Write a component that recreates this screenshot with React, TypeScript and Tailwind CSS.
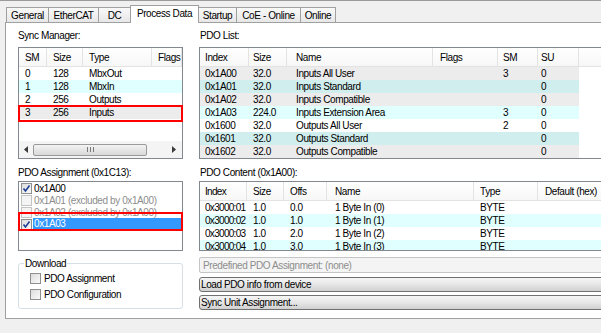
import React from 'react';

const FONT = "font-['Liberation_Sans',Arial,sans-serif]";

const tabs = [
  { label: 'General', w: 'w-[43px]' },
  { label: 'EtherCAT', w: 'w-[51px]' },
  { label: 'DC', w: 'w-[33px]' },
  { label: 'Process Data', w: 'w-[69px]', active: true },
  { label: 'Startup', w: 'w-[39px]' },
  { label: 'CoE - Online', w: 'w-[65px]' },
  { label: 'Online', w: 'w-[36px]' },
];

const smCols = [
  { label: 'SM', w: 'w-[28px]', pl: 'pl-[6px]' },
  { label: 'Size', w: 'w-[36px]', pl: 'pl-[6px]' },
  { label: 'Type', w: 'w-[69px]', pl: 'pl-[6px]' },
  { label: 'Flags', w: 'w-[30px]', pl: 'pl-[6px]' },
];

const smRows = [
  { cells: ['0', '128', 'MbxOut'], bg: 'bg-white' },
  { cells: ['1', '128', 'MbxIn'], bg: 'bg-[#e0ffff]' },
  { cells: ['2', '256', 'Outputs'], bg: 'bg-white' },
  { cells: ['3', '256', 'Inputs'], bg: 'bg-[#ececec]' },
];

const listCols = [
  { label: 'Index', w: 'w-[49px]', pl: 'pl-[5px]' },
  { label: 'Size', w: 'w-[38px]', pl: 'pl-[4px]' },
  { label: 'Name', w: 'w-[146px]', pl: 'pl-[9px]' },
  { label: 'Flags', w: 'w-[65px]', pl: 'pl-[7px]' },
  { label: 'SM', w: 'w-[40px]', pl: 'pl-[5px]' },
  { label: 'SU', w: 'w-[41px]', pl: 'pl-[3px]' },
];

const listRows = [
  { cells: ['0x1A00', '32.0', 'Inputs All User', '', '3', '0'], bg: 'bg-[#ececec]' },
  { cells: ['0x1A01', '32.0', 'Inputs Standard', '', '', '0'], bg: 'bg-[#d0eeee]' },
  { cells: ['0x1A02', '32.0', 'Inputs Compatible', '', '', '0'], bg: 'bg-[#ececec]' },
  { cells: ['0x1A03', '224.0', 'Inputs Extension Area', '', '3', '0'], bg: 'bg-[#e0ffff]' },
  { cells: ['0x1600', '32.0', 'Outputs All User', '', '2', '0'], bg: 'bg-white' },
  { cells: ['0x1601', '32.0', 'Outputs Standard', '', '', '0'], bg: 'bg-[#d0eeee]' },
  { cells: ['0x1602', '32.0', 'Outputs Compatible', '', '', '0'], bg: 'bg-[#ececec]' },
];

const contentCols = [
  { label: 'Index', w: 'w-[47px]', pl: 'pl-[5px] tracking-[-0.7px]' },
  { label: 'Size', w: 'w-[37px]', pl: 'pl-[6px]' },
  { label: 'Offs', w: 'w-[43px]', pl: 'pl-[6px]' },
  { label: 'Name', w: 'w-[147px]', pl: 'pl-[8px]' },
  { label: 'Type', w: 'w-[64px]', pl: 'pl-[6px]' },
  { label: 'Default (hex)', w: 'w-[70px]', pl: 'pl-[7px]' },
];

const contentRows = [
  { cells: ['0x3000:01', '1.0', '0.0', '1 Byte In (0)', 'BYTE', ''], bg: 'bg-white' },
  { cells: ['0x3000:02', '1.0', '1.0', '1 Byte In (1)', 'BYTE', ''], bg: 'bg-[#e0ffff]' },
  { cells: ['0x3000:03', '1.0', '2.0', '1 Byte In (2)', 'BYTE', ''], bg: 'bg-white' },
  { cells: ['0x3000:04', '1.0', '3.0', '1 Byte In (3)', 'BYTE', ''], bg: 'bg-[#e0ffff]' },
];

type Col = { label: string; w: string; pl: string };

const Header = ({ cols }: { cols: Col[] }) => (
  <div className="flex h-[19px] shrink-0 border-b border-[#e3e3e3] bg-linear-to-b from-white to-[#f7f7f7]">
    {cols.map((c) => (
      <div
        key={c.label}
        className={`${c.w} ${c.pl} shrink-0 overflow-hidden whitespace-nowrap border-r border-[#e3e3e3] flex items-center`}
      >
        {c.label}
      </div>
    ))}
    <div className="flex-1" />
  </div>
);

const Row = ({ cols, cells, bg, full }: { cols: Col[]; cells: string[]; bg: string; full?: boolean }) => (
  <div className={`flex h-[13px] shrink-0 ${full ? `${bg} w-full` : ''}`}>
    <div className={`flex ${full ? '' : bg}`}>
      {cols.map((c, i) => (
        <div key={c.label} className={`${c.w} ${c.pl} shrink-0 overflow-hidden whitespace-nowrap leading-[13px]`}>
          {cells[i] ?? ''}
        </div>
      ))}
    </div>
  </div>
);

const CheckBox = ({ checked, disabled }: { checked?: boolean; disabled?: boolean }) => (
  <div
    className={`relative w-[11px] h-[11px] shrink-0 border ${
      disabled ? 'border-[#c4c4c4] bg-[#f4f4f4]' : 'border-[#8e8f8f] bg-linear-to-br from-[#dcdcdc] to-[#fafafa]'
    }`}
  >
    {checked && (
      <svg className="absolute left-0 top-0" width="9" height="9" viewBox="0 0 9 9">
        <path d="M1.5 4.5 L3.5 7 L7.5 1.5" fill="none" stroke="#1c3f95" strokeWidth="1.6" />
      </svg>
    )}
  </div>
);

export default function App() {
  return (
    <div className={`${FONT} w-[601px] h-[333px] overflow-hidden bg-[#f0f0f0] border-t border-[#9a9a9a] text-[10px] tracking-[-0.4px] leading-[13px] text-black`}>
      {/* Tabs */}
      <div className="flex items-end h-[21px] pl-[6px]">
        {tabs.map((t, i) => (
          <div
            key={t.label}
            className={`${t.w} ${i > 0 ? '-ml-px' : ''} shrink-0 flex items-center justify-center border border-b-0 border-[#a0a0a0] whitespace-nowrap ${
              t.active
                ? 'relative z-10 h-[18px] -mb-px bg-white pb-[2px]'
                : 'h-[15px] bg-linear-to-b from-[#f9f9f9] to-[#e7e7e7] pt-[1px]'
            }`}
          >
            {t.label}
          </div>
        ))}
      </div>

      {/* Panel */}
      <div className="ml-[5px] w-[600px] h-[297px] bg-white border border-[#a0a0a0] flex gap-[16px] pl-[12px] pt-[6px]">
        {/* Left column */}
        <div className="w-[165px] shrink-0 flex flex-col">
          <div className="h-[13px]">Sync Manager:</div>
          <div className="relative mt-[5px] h-[112px] border border-[#828790] flex flex-col">
            <Header cols={smCols} />
            {smRows.map((r) => (
              <Row key={r.cells[0]} cols={smCols} cells={r.cells} bg={r.bg} full />
            ))}
            <div className="flex-1" />
            <div className="h-[17px] flex items-center bg-[#f4f4f4]">
              <div className="w-[14px] flex justify-center">
                <svg width="4" height="7" viewBox="0 0 4 7"><path d="M4 0 L0 3.5 L4 7 Z" fill="#3a3a3a" /></svg>
              </div>
              <div className="w-[114px] h-[12px] rounded-[2px] border border-[#9a9a9a] bg-linear-to-b from-[#f3f3f3] to-[#d9d9d9] flex items-center justify-center gap-[2px]">
                <div className="w-px h-[5px] bg-[#7a7a7a]" />
                <div className="w-px h-[5px] bg-[#7a7a7a]" />
                <div className="w-px h-[5px] bg-[#7a7a7a]" />
              </div>
              <div className="flex-1" />
              <div className="w-[17px] flex justify-center">
                <svg width="4" height="7" viewBox="0 0 4 7"><path d="M0 0 L4 3.5 L0 7 Z" fill="#3a3a3a" /></svg>
              </div>
            </div>
            {/* red annotation */}
            <div className="absolute -left-px top-[57px] w-[165px] h-[17px] border-2 border-[#ff0000]" />
          </div>

          <div className="mt-[7px] h-[13px]">PDO Assignment (0x1C13):</div>
          <div className="relative mt-[2px] h-[70px] border border-[#828790] flex flex-col">
            <div className="flex items-center h-[12px] pl-[2px]">
              <CheckBox checked />
              <div className="ml-[1px] pl-[1px]">0x1A00</div>
            </div>
            <div className="flex items-center h-[12px] pl-[2px] text-[#8d8d8d]">
              <CheckBox disabled />
              <div className="ml-[1px] pl-[1px] whitespace-nowrap">0x1A01 (excluded by 0x1A00)</div>
            </div>
            <div className="flex items-center h-[12px] pl-[2px] text-[#8d8d8d]">
              <CheckBox disabled />
              <div className="ml-[1px] pl-[1px] whitespace-nowrap">0x1A02 (excluded by 0x1A00)</div>
            </div>
            <div className="flex items-center h-[12px] pl-[2px]">
              <CheckBox checked />
              <div className="ml-[1px] pl-[1px] flex-1 h-[12px] bg-[#3399ff] text-white leading-[12px]">0x1A03</div>
            </div>
            {/* red annotation */}
            <div className="absolute -left-px top-[30px] w-[165px] h-[19px] border-2 border-[#ff0000]" />
          </div>

          <fieldset className="mt-[6px] border border-[#d5dfe5] rounded-[3px] pb-[6px]">
            <legend className="ml-[5px] px-[1px] leading-[13px]">Download</legend>
            <div className="pl-[11px]">
              <div className="flex items-center h-[16px] gap-[3px]">
                <CheckBox />
                <span>PDO Assignment</span>
              </div>
              <div className="flex items-center h-[16px] gap-[3px]">
                <CheckBox />
                <span>PDO Configuration</span>
              </div>
            </div>
          </fieldset>
        </div>

        {/* Right column */}
        <div className="flex-1 flex flex-col min-w-0">
          <div className="h-[13px] pl-[1px]">PDO List:</div>
          <div className="mt-[5px] h-[112px] border border-[#828790] flex flex-col overflow-hidden">
            <Header cols={listCols} />
            {listRows.map((r) => (
              <Row key={r.cells[0]} cols={listCols} cells={r.cells} bg={r.bg} />
            ))}
          </div>

          <div className="mt-[7px] h-[13px] pl-[1px]">PDO Content (0x1A00):</div>
          <div className="mt-[2px] h-[70px] border border-[#828790] flex flex-col overflow-hidden">
            <Header cols={contentCols} />
            {contentRows.map((r) => (
              <Row key={r.cells[0]} cols={contentCols} cells={r.cells} bg={r.bg} full />
            ))}
          </div>

          <div className="mt-[6px] h-[16px] border border-[#c5c5c5] rounded-[2px] bg-[#f4f4f4] text-[#8d8d8d] pl-[3px] flex items-center">
            Predefined PDO Assignment: (none)
          </div>
          <button className="mt-[4px] h-[15px] border border-[#707070] rounded-[3px] bg-linear-to-b from-[#f6f6f6] via-[#e6e6e6] to-[#d0d0d0] pl-[1px] flex items-center text-left">
            Load PDO info from device
          </button>
          <button className="mt-[3px] h-[15px] border border-[#707070] rounded-[3px] bg-linear-to-b from-[#f6f6f6] via-[#e6e6e6] to-[#d0d0d0] pl-[1px] flex items-center text-left">
            Sync Unit Assignment...
          </button>
        </div>
      </div>
    </div>
  );
}
